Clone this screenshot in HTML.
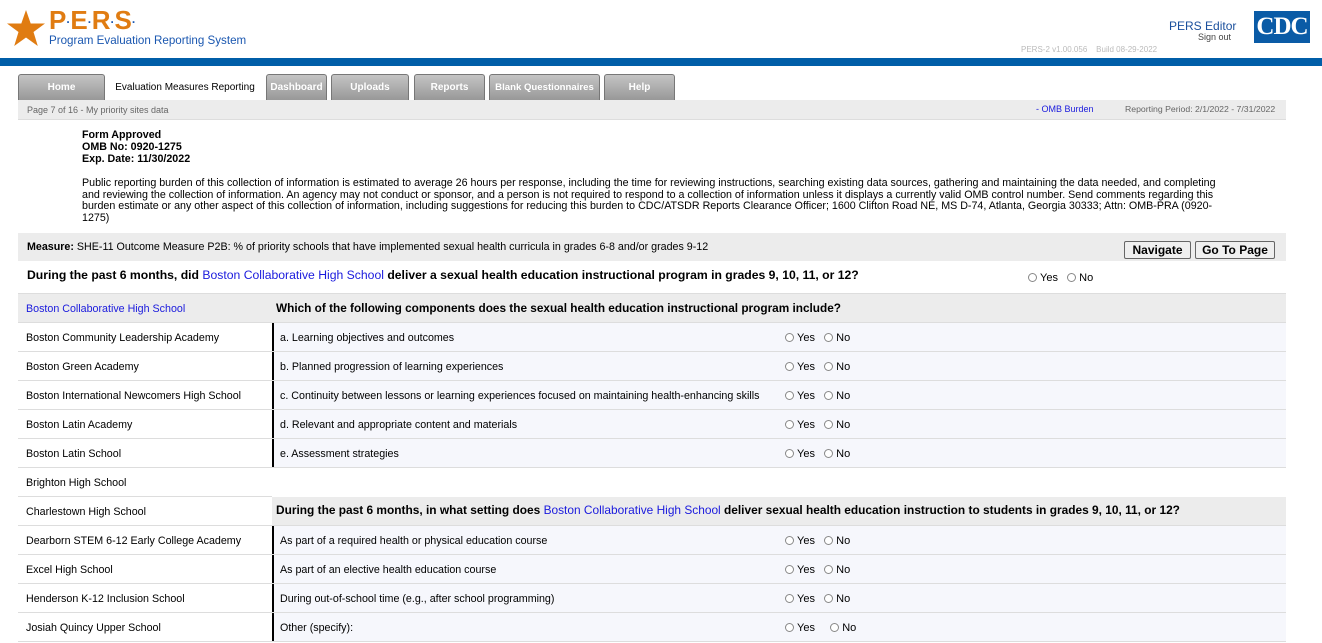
<!DOCTYPE html>
<html><head><meta charset="utf-8"><style>
*{margin:0;padding:0;box-sizing:border-box}
body{width:1322px;height:643px;overflow:hidden;background:#fff;font-family:"Liberation Sans",Arial,sans-serif;color:#000;position:relative}
.a{position:absolute;white-space:nowrap}
.tab{position:absolute;top:74px;height:26px;border:1px solid #777;border-bottom:none;border-radius:3px 3px 0 0;background:linear-gradient(#c4c4c4,#989898);color:#fff;font-weight:bold;font-size:10px;text-align:center;line-height:25px}
.row{position:absolute;left:18px;width:1268px;height:29px;border-bottom:1px solid #ddd}
.row .l{position:absolute;left:8px;top:9px;font-size:10.7px}
.row .r{position:absolute;left:254px;top:0;width:1014px;height:28px;background:#f6f7fc;border-left:2px solid #000}
.row .r .t{position:absolute;left:6px;top:9px;font-size:10.7px}
.yn{position:absolute;top:9px;font-size:11px}
.rad{display:inline-block;width:9px;height:9px;border:1px solid #888;border-radius:50%;vertical-align:-1px;margin-right:3px;background:#fff}
.btn{position:absolute;top:241px;height:18px;border:1px solid #666;background:#efefef;font-size:12px;font-weight:bold;text-align:center;line-height:16px;border-radius:2px}
</style></head><body>
<svg class="a" style="left:6px;top:10px" width="40" height="38" viewBox="0 0 40 38"><polygon points="20,0 24.7,13.5 39,13.5 27.5,22 31.8,36 20,27.5 8.2,36 12.5,22 1,13.5 15.3,13.5" fill="#e07c12"/></svg>
<div class="a" style="left:49px;top:5px;font-size:26px;font-weight:bold;color:#e07c12">P<span style="font-size:12px;vertical-align:middle;color:#1a57b0">·</span>E<span style="font-size:12px;vertical-align:middle;color:#1a57b0">·</span>R<span style="font-size:12px;vertical-align:middle;color:#1a57b0">·</span>S<span style="font-size:12px;vertical-align:middle;color:#1a57b0">·</span></div>
<div class="a" style="left:49px;top:34px;font-size:11.6px;color:#1a57b0">Program Evaluation Reporting System</div>
<div class="a" style="left:1169px;top:19px;font-size:12px;color:#1a4f9c">PERS Editor</div>
<div class="a" style="left:1198px;top:32px;font-size:9px;color:#444">Sign out</div>
<div class="a" style="left:1254px;top:11px;width:56px;height:32px;background:#0a5ba6;color:#fff;font-family:'Liberation Serif',serif;font-size:25px;font-weight:bold;text-align:center;line-height:32px;letter-spacing:-1px">CDC</div>
<div class="a" style="left:1021px;top:45px;font-size:8px;color:#bbb">PERS-2 v1.00.056 &nbsp;&nbsp; Build 08-29-2022</div>
<div class="a" style="left:0;top:58px;width:1322px;height:8px;background:#005ea8"></div>

<div class="tab" style="left:18px;width:87px">Home</div>
<div class="tab" style="left:107px;width:156px;background:#fff;color:#000;border:none;font-weight:normal;font-size:10px;line-height:27px">Evaluation Measures Reporting</div>
<div class="tab" style="left:266px;width:61px">Dashboard</div>
<div class="tab" style="left:331px;width:78px">Uploads</div>
<div class="tab" style="left:414px;width:71px">Reports</div>
<div class="tab" style="left:489px;width:111px;font-size:9.6px">Blank Questionnaires</div>
<div class="tab" style="left:604px;width:71px">Help</div>
<div class="a" style="left:18px;top:100px;width:1268px;height:20px;background:#ececec;border-bottom:1px solid #ddd"></div>
<div class="a" style="left:27px;top:105px;font-size:9px;color:#666">Page 7 of 16 - My priority sites data</div>
<div class="a" style="left:1036px;top:104px;font-size:9px;color:#1a1add">- OMB Burden</div>
<div class="a" style="left:1125px;top:104px;font-size:8.7px;color:#666">Reporting Period: 2/1/2022 - 7/31/2022</div>

<div class="a" style="left:82px;top:129px;font-size:10.7px;font-weight:bold;line-height:12px">Form Approved<br>OMB No: 0920-1275<br>Exp. Date: 11/30/2022</div>
<div class="a" style="left:82px;top:178px;font-size:10.7px;line-height:11.5px">Public reporting burden of this collection of information is estimated to average 26 hours per response, including the time for reviewing instructions, searching existing data sources, gathering and maintaining the data needed, and completing<br>and reviewing the collection of information. An agency may not conduct or sponsor, and a person is not required to respond to a collection of information unless it displays a currently valid OMB control number. Send comments regarding this<br>burden estimate or any other aspect of this collection of information, including suggestions for reducing this burden to CDC/ATSDR Reports Clearance Officer; 1600 Clifton Road NE, MS D-74, Atlanta, Georgia 30333; Attn: OMB-PRA (0920-<br>1275)</div>

<div class="a" style="left:18px;top:233px;width:1268px;height:28px;background:#ececec"></div>
<div class="a" style="left:27px;top:241px;font-size:10.7px"><b>Measure:</b> SHE-11 Outcome Measure P2B: % of priority schools that have implemented sexual health curricula in grades 6-8 and/or grades 9-12</div>
<div class="btn" style="left:1124px;width:67px">Navigate</div>
<div class="btn" style="left:1195px;width:80px">Go To Page</div>
<div class="a" style="left:18px;top:261px;width:1268px;height:33px;background:#fff;border-bottom:1px solid #ddd"></div>
<div class="a" style="left:27px;top:268px;font-size:12.2px;font-weight:bold">During the past 6 months, did <span style="color:#1a1add;font-weight:normal">Boston Collaborative High School</span> deliver a sexual health education instructional program in grades 9, 10, 11, or 12?</div>
<div class="yn" style="left:1028px;top:272px"><span class="rad"></span>Yes &nbsp;&nbsp;<span class="rad"></span>No</div>

<div class="row" style="top:294px;background:#ececec;height:29px"><span class="l" style="color:#1a1add">Boston Collaborative High School</span><span class="a" style="left:258px;top:7px;font-size:11.8px;font-weight:bold">Which of the following components does the sexual health education instructional program include?</span></div>

<div class="row" style="top:323px"><span class="l">Boston Community Leadership Academy</span><div class="r"><span class="t">a. Learning objectives and outcomes</span><div class="yn" style="left:511px"><span class="rad"></span>Yes &nbsp;&nbsp;<span class="rad"></span>No</div></div></div>
<div class="row" style="top:352px"><span class="l">Boston Green Academy</span><div class="r"><span class="t">b. Planned progression of learning experiences</span><div class="yn" style="left:511px"><span class="rad"></span>Yes &nbsp;&nbsp;<span class="rad"></span>No</div></div></div>
<div class="row" style="top:381px"><span class="l">Boston International Newcomers High School</span><div class="r"><span class="t">c. Continuity between lessons or learning experiences focused on maintaining health-enhancing skills</span><div class="yn" style="left:511px"><span class="rad"></span>Yes &nbsp;&nbsp;<span class="rad"></span>No</div></div></div>
<div class="row" style="top:410px"><span class="l">Boston Latin Academy</span><div class="r"><span class="t">d. Relevant and appropriate content and materials</span><div class="yn" style="left:511px"><span class="rad"></span>Yes &nbsp;&nbsp;<span class="rad"></span>No</div></div></div>
<div class="row" style="top:439px"><span class="l">Boston Latin School</span><div class="r"><span class="t">e. Assessment strategies</span><div class="yn" style="left:511px"><span class="rad"></span>Yes &nbsp;&nbsp;<span class="rad"></span>No</div></div></div>
<div class="row" style="top:468px;width:254px"><span class="l">Brighton High School</span></div>
<div class="row" style="top:497px"><span class="l">Charlestown High School</span><div class="a" style="left:254px;top:0;width:1014px;height:28px;background:#ececec"></div><span class="a" style="left:258px;top:6px;font-size:11.9px;font-weight:bold">During the past 6 months, in what setting does <span style="color:#1a1add;font-weight:normal">Boston Collaborative High School</span> deliver sexual health education instruction to students in grades 9, 10, 11, or 12?</span></div>
<div class="row" style="top:526px"><span class="l">Dearborn STEM 6-12 Early College Academy</span><div class="r"><span class="t">As part of a required health or physical education course</span><div class="yn" style="left:511px"><span class="rad"></span>Yes &nbsp;&nbsp;<span class="rad"></span>No</div></div></div>
<div class="row" style="top:555px"><span class="l">Excel High School</span><div class="r"><span class="t">As part of an elective health education course</span><div class="yn" style="left:511px"><span class="rad"></span>Yes &nbsp;&nbsp;<span class="rad"></span>No</div></div></div>
<div class="row" style="top:584px"><span class="l">Henderson K-12 Inclusion School</span><div class="r"><span class="t">During out-of-school time (e.g., after school programming)</span><div class="yn" style="left:511px"><span class="rad"></span>Yes &nbsp;&nbsp;<span class="rad"></span>No</div></div></div>
<div class="row" style="top:613px"><span class="l">Josiah Quincy Upper School</span><div class="r"><span class="t">Other (specify):</span><div class="yn" style="left:511px"><span class="rad"></span>Yes &nbsp;&nbsp;&nbsp;&nbsp;<span class="rad"></span>No</div></div></div>
</body></html>
